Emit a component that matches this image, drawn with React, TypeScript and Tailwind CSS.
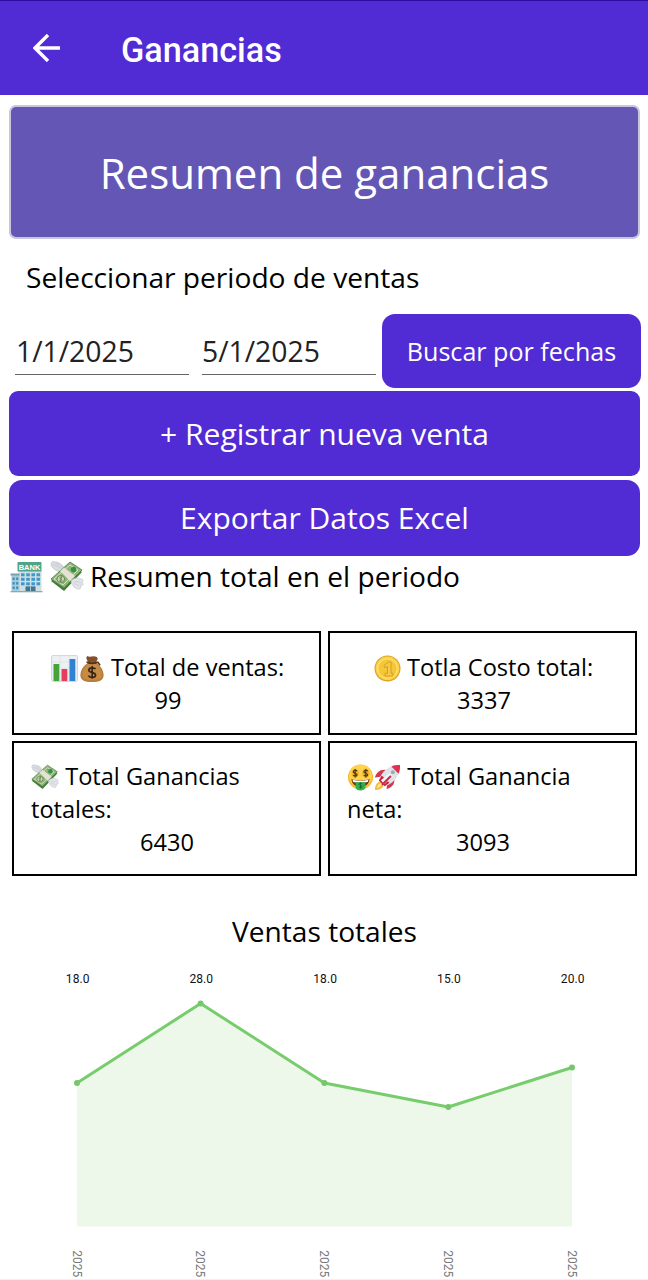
import type { ReactNode } from 'react';

interface SalePoint {
  x: number;
  y: number;
  value: string;
  label: string;
}

const sales: SalePoint[] = [
  { x: 77, y: 123, value: '18.0', label: '2025' },
  { x: 200.6, y: 43.5, value: '28.0', label: '2025' },
  { x: 324.4, y: 123, value: '18.0', label: '2025' },
  { x: 448.3, y: 147, value: '15.0', label: '2025' },
  { x: 572, y: 107.5, value: '20.0', label: '2025' },
];

interface IconProps {
  className: string;
}

function BankIcon({ className }: IconProps) {
  return (
    <svg viewBox="0 -3 32 35" className={className}>
      <rect x="8" y="8" width="23" height="23" fill="#cfe0e2" />
      <rect x="1" y="14" width="8" height="16" fill="#a9cbd8" />
      <rect x="0" y="12.5" width="9" height="2" fill="#7ba0ae" />
      <rect x="7" y="1" width="24" height="9.6" rx="0.8" fill="#4fa58a" />
      <text x="19" y="8.5" textAnchor="middle" fontSize="7.5" fontWeight="700" fill="#fff" fontFamily="Liberation Sans, sans-serif">
        BANK
      </text>
      {[12.3, 16.8, 21.3].map((y) => (
        <g key={y} fill="#3f97cb">
          <rect x="10.5" y={y} width="3.6" height="3" />
          <rect x="15.7" y={y} width="3.6" height="3" />
          <rect x="20.9" y={y} width="3.6" height="3" />
          <rect x="26" y={y} width="3.6" height="3" />
        </g>
      ))}
      {[16.5, 21, 25.5].map((y) => (
        <g key={y} fill="#3c91c2">
          <rect x="2" y={y} width="2.2" height="2.6" />
          <rect x="5.6" y={y} width="2.2" height="2.6" />
        </g>
      ))}
      <rect x="15" y="25.4" width="10" height="5" fill="#46768d" />
      <path d="M20 25.4v5" stroke="#b8dce5" strokeWidth="0.8" />
      <rect x="0" y="30" width="32" height="1.3" fill="#8fa9b1" />
    </svg>
  );
}

function FlyingMoneyIcon({ className }: IconProps) {
  return (
    <svg viewBox="0 0 34 32" className={className}>
      <path d="M11 11C6 10 1 7 1 3c0-2 2-3 4-2 4 0 7 2 10 7z" fill="#d9dce2" stroke="#b9bec7" strokeWidth="0.6" />
      <path d="M3 4c4 0 7 2 9 6M6 2c3 1 5 3 7 6" fill="none" stroke="#c3c8d0" strokeWidth="0.7" />
      <path d="M1 20 20 3l12 8-18 19z" fill="#427d39" />
      <path d="M1 18 20 1l12 8-18 18z" fill="#8fb47a" stroke="#477b3d" strokeWidth="0.8" />
      <path d="M4 18 20 4l8 5-15 15z" fill="none" stroke="#dce8c9" strokeWidth="0.9" />
      <path d="M10 10 14 6.5 25 15l-5 5z" fill="#e5e2d4" />
      <circle cx="23.5" cy="8.5" r="2.7" fill="#2e934a" />
      <ellipse cx="10.8" cy="18" rx="3.8" ry="3.5" fill="#ced9b4" stroke="#4c7a3c" strokeWidth="0.8" />
      <path d="M12.2 16.4c-1.5-1.2-3.3.2-2 1.4 1.2.9 2 .9 1.6 2-.6.9-1.8.5-2.3-.2M11.8 15.4l-1.7 5.3" fill="none" stroke="#42713a" strokeWidth="0.7" />
      <path d="M21 20c1 5 4 8 8 8 2 0 2-2 1-3 3 0 4-2 2-4 2-1 1-3-1-3-4-2-7-1-10 2z" fill="#e2e4e9" stroke="#c3c8d0" strokeWidth="0.7" />
      <path d="M24 21c3-1 5 0 7 1M24 23c2 0 4 1 5 2" fill="none" stroke="#c3c8d0" strokeWidth="0.7" />
    </svg>
  );
}

function BarsIcon({ className }: IconProps) {
  return (
    <svg viewBox="0 0 27 27" className={className}>
      <rect x="0.6" y="0.6" width="25.8" height="25.8" rx="1" fill="#eef1f4" stroke="#ced4d9" />
      <path d="M1 7h25M1 13h25M1 19h25M9 1v25M18 1v25" stroke="#d9dfe4" strokeWidth="0.7" />
      <rect x="2.5" y="9" width="5.8" height="17" fill="#45a337" />
      <rect x="10.5" y="14" width="5.8" height="12" fill="#e83c5c" />
      <rect x="18.5" y="4" width="5.8" height="22" fill="#2f83d2" />
    </svg>
  );
}

function MoneyBagIcon({ className }: IconProps) {
  return (
    <svg viewBox="0 0 26 29" className={className}>
      <path d="M8 1c3 2 6-1 10 1l1 2-3 6H10L7 3z" fill="#83502a" />
      <path d="M9 8C4 11 1 16 1 21c0 5 4 7 12 7s12-2 12-7c0-5-3-10-8-13z" fill="#b97d3c" />
      <path d="M9 9c-4 3-6 8-6 12 0 3 3 5 9 5 7 0 11-1 11-5 0-5-2-9-6-12z" fill="#c68b45" />
      <path d="M8 7.5c3 1.5 7 1.5 11 0l2 2.5" fill="none" stroke="#4f3019" strokeWidth="1.7" strokeLinecap="round" />
      <path d="M16.6 14.5c-1-1.6-6.7-2-6.9 1.1-.1 3.7 7.1 1.6 7 5.3-.2 3.1-6 2.8-7.4.4M13.2 11.5v13" fill="none" stroke="#3a2515" strokeWidth="1.7" />
    </svg>
  );
}

function CoinIcon({ className }: IconProps) {
  return (
    <svg viewBox="0 0 27 27" className={className}>
      <circle cx="13.5" cy="13.5" r="13" fill="#dfa526" />
      <circle cx="13.5" cy="13.3" r="11.8" fill="#fbd24a" />
      <circle cx="13.5" cy="13.5" r="9.7" fill="#f6c636" stroke="#ffe680" strokeWidth="1" />
      <path d="M10 10.5 14.5 7H17v11.3h2V21h-8v-2.7h2.5v-7L11 13z" fill="#f6cb48" stroke="#d09a24" strokeWidth="0.9" />
    </svg>
  );
}

function MoneyFaceIcon({ className }: IconProps) {
  return (
    <svg viewBox="0 0 27 28" className={className}>
      <circle cx="13.5" cy="13.5" r="13" fill="#f6b931" />
      <circle cx="13.5" cy="12.5" r="11.8" fill="#ffd34d" />
      {[8, 19].map((x) => (
        <g key={x} transform={`translate(${x} 9.5)`}>
          <ellipse rx="3.9" ry="4.8" fill="#f2b72e" />
          <path d="M2-2C1-3.8-2-3-2-1.3-1.8.3 2-.2 2 1.8 1.7 3.6-1.3 3.4-2 2M0-4.4v8.8" fill="none" stroke="#49340e" strokeWidth="1.2" />
        </g>
      ))}
      <path d="M4 15.5c5 2 14 2 19 0-1 6-4 8-9.5 8S5 21.5 4 15.5z" fill="#72371c" />
      <path d="M5.2 16.3c5 1.5 11.5 1.5 16.6 0l-.6 2c-4 1.2-11.5 1.2-15.4 0z" fill="#fff" />
      <path d="M8.5 19h10v5c0 4-10 5-10 0z" fill="#35ae4c" />
      <path d="M15.2 20.6c-1-1.5-3.3-1-3.2.3.1 1.6 3.3 1 3.2 2.7-.2 1.3-2.5 1.3-3.4.1M13.5 19.3v6.2" fill="none" stroke="#176d31" strokeWidth="1" />
    </svg>
  );
}

function RocketIcon({ className }: IconProps) {
  return (
    <svg viewBox="0 0 28 28" className={className}>
      <path d="M7 18c-4 1-6 4-6 9 4 0 8-1 9-6z" fill="#f5b944" />
      <path d="M6.5 20c-2 1-3 3-3.5 5 2-.5 4-2 5-4z" fill="#fff0a0" />
      <path d="M12 6C7 5 2 9 1 14l8-1zM21 15c1 6-3 10-8 11l1-8z" fill="#cf3850" />
      <path d="M5 17C8 7 16 1 27 1c0 11-6 19-16 22z" fill="#dfe2e8" />
      <path d="M18 2.5c3-1.5 6-1.5 9-1.5 0 3 0 6-1.5 9z" fill="#df304d" />
      <path d="M5 17 8 12l8 7.5-5 3.5z" fill="#c6213e" />
      <path d="m9 19 9-8" stroke="#f2f3f5" strokeWidth="5.5" />
      <path d="m9 21 8-8" stroke="#d62745" strokeWidth="2.2" strokeLinecap="round" />
      <circle cx="19.5" cy="8.5" r="2" fill="#9aa9b3" />
    </svg>
  );
}

interface StatCardProps {
  icons: ReactNode;
  title: string;
  value: string;
  centered?: boolean;
}

function StatCard({ icons, title, value, centered = false }: StatCardProps) {
  return (
    <div className={`border-2 border-black text-[23.6px] ${centered ? 'pl-[18px] pr-4 pt-[18px] leading-[33px]' : 'px-[17px] pt-[17px] leading-[32.8px]'}`}>
      <div className={centered ? 'text-center' : 'text-left'}>
        {icons} {title}
      </div>
      <div className="pl-px text-center">{value}</div>
    </div>
  );
}

function SalesChart() {
  const line = sales.map((point) => `${point.x},${point.y}`).join(' ');

  return (
    <svg viewBox="0 0 648 320" className="block h-[320px] w-[648px] font-[Roboto,sans-serif]">
      <polygon points={`77,266.5 ${line} 572,266.5`} fill="#edf7ea" />
      <polyline points={line} fill="none" stroke="#77cc6c" strokeWidth="3" strokeLinejoin="round" />
      {sales.map((point) => (
        <g key={point.x}>
          <circle cx={point.x} cy={point.y} r="3" fill="#77c66c" />
          <text x={point.x + 0.7} y="22.5" textAnchor="middle" fontSize="12" letterSpacing="0.1" fill="#111">
            {point.value}
          </text>
          <text transform={`translate(${point.x - 4.3} 290.3) rotate(90)`} fontSize="12" fill="#777">
            {point.label}
          </text>
        </g>
      ))}
      <path d="M0 319.5h648" stroke="#f0f0f0" />
    </svg>
  );
}

export default function App() {
  return (
    <div className="flex h-[1280px] w-[648px] flex-col overflow-hidden bg-white font-['Open_Sans',sans-serif] text-black">
      <header className="flex h-[95px] shrink-0 items-center border-t border-[#2b0ca2] bg-[#512bd4] pl-[33px] text-white">
        <svg viewBox="0 0 28 28" className="h-7 w-7" fill="none" stroke="currentColor" strokeWidth="3.4">
          <path d="M27 14H2M15 1 2 14l13 13" />
        </svg>
        <h1 className="ml-[60px] mt-[4px] font-[Roboto,sans-serif] text-[34.2px] font-medium leading-none">Ganancias</h1>
      </header>

      <main className="flex flex-col">
        <div className="ml-[9px] mr-2 mt-[10px] flex h-[134px] items-center justify-center rounded-[7px] border-2 border-[#c8c5dc] bg-[#6456b5] text-[42px] text-white">
          Resumen de ganancias
        </div>
        <h2 className="mt-[16px] pl-[26px] text-[28.15px] leading-[44px]">Seleccionar periodo de ventas</h2>

        <div className="mt-[15px] flex h-[74px] pl-[15px] text-[28.3px] text-[#222]">
          <div className="mr-[13px] h-[61px] w-[174px] border-b border-[#666] pl-[1px] pt-[15px] leading-[44px]">1/1/2025</div>
          <div className="mr-[6px] h-[61px] w-[174px] border-b border-[#666] pt-[15px] leading-[44px]">5/1/2025</div>
          <button className="h-[74px] w-[259px] rounded-[13px] bg-[#512bd4] pt-px text-[25.1px] text-white">Buscar por fechas</button>
        </div>
        <button className="ml-[9px] mr-2 mt-[3px] h-[85px] rounded-[9px] bg-[#512bd4] text-[30px] text-white">+ Registrar nueva venta</button>
        <button className="ml-[9px] mr-2 mt-1 h-[76px] rounded-[13px] bg-[#512bd4] pb-[2px] text-[30px] text-white">Exportar Datos Excel</button>

        <h2 className="flex h-[42px] items-center pl-[10px] text-[28.1px] leading-[40px]">
          <BankIcon className="-mt-[3px] mr-[7px] h-[35px] w-[33px]" />
          <FlyingMoneyIcon className="mr-[6px] h-8 w-[34px]" />
          <span className="-mt-[2px]">Resumen total en el periodo</span>
        </h2>

        <div className="ml-3 mt-[33px] grid w-[625px] grid-cols-2 grid-rows-[104px_135px] gap-x-[7px] gap-y-[6px]">
          <StatCard
            centered
            icons={<><BarsIcon className="-mt-[2px] mr-[1px] inline h-[27px] w-[27px] align-middle" /><MoneyBagIcon className="-mt-[2px] inline h-[28px] w-[26px] align-middle" /></>}
            title="Total de ventas:"
            value="99"
          />
          <StatCard centered icons={<CoinIcon className="-mt-[2px] inline h-[27px] w-[27px] align-middle" />} title="Totla Costo total:" value="3337" />
          <StatCard icons={<FlyingMoneyIcon className="-mt-[2px] inline h-[27px] w-[28px] align-middle" />} title="Total Ganancias totales:" value="6430" />
          <StatCard
            icons={<><MoneyFaceIcon className="-mt-[2px] inline h-[27px] w-[27px] align-middle" /><RocketIcon className="-mt-[2px] inline h-[27px] w-[27px] align-middle" /></>}
            title="Total Ganancia neta:"
            value="3093"
          />
        </div>

        <h2 className="mt-[33px] h-[51px] pl-px text-center text-[28.1px] leading-[44px]">Ventas totales</h2>
        <SalesChart />
      </main>
    </div>
  );
}
